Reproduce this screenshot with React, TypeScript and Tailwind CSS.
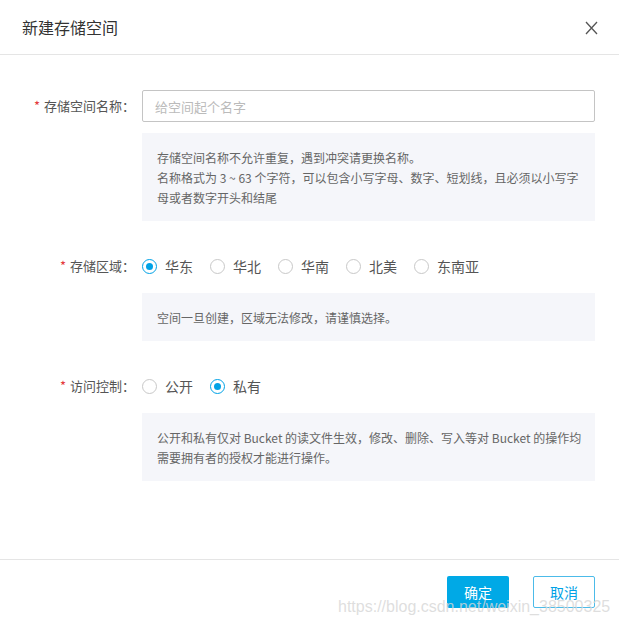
import React, { useState } from 'react';

const FONT = { fontFamily: '"Noto Sans CJK SC", "Microsoft YaHei", sans-serif' };

const regions = ['华东', '华北', '华南', '北美', '东南亚'];
const access = ['公开', '私有'];

function Radio({ checked, label, onClick }: { checked: boolean; label: string; onClick: () => void }) {
  return (
    <button type="button" onClick={onClick} className="flex items-center gap-[8px] mr-[17px]">
      <span
        className={`w-[15px] h-[15px] rounded-full border flex items-center justify-center bg-white ${
          checked ? 'border-[#00a2e6]' : 'border-[#c8c8c8]'
        }`}
      >
        {checked && <span className="w-[7px] h-[7px] rounded-full bg-[#00a2e6]" />}
      </span>
      <span className="text-[14px] text-[#555]">{label}</span>
    </button>
  );
}

function Label({ text }: { text: string }) {
  return (
    <div className="w-[137px] h-[32px] flex items-center justify-end pr-[2px] text-[13px] text-[#555] shrink-0">
      <span className="text-[#e4393c] mr-[4px]">*</span>
      {text}
    </div>
  );
}

function Hint({ children }: { children: React.ReactNode }) {
  return (
    <div className="ml-[142px] mr-[24px] mt-[11px] bg-[#f5f6fa] pl-[15px] pr-[12px] pt-[15px] pb-[13px] text-[12px] leading-[20px] text-[#666]">
      {children}
    </div>
  );
}

export default function App() {
  const [region, setRegion] = useState('华东');
  const [acl, setAcl] = useState('私有');
  const [name, setName] = useState('');

  return (
    <div className="relative w-[619px] h-[625px] bg-white flex flex-col" style={FONT}>
      {/* Header */}
      <div className="h-[55px] flex items-center justify-between pl-[22px] pr-[21px] border-b border-[#e5e5e5]">
        <span className="text-[16px] text-[#333]">新建存储空间</span>
        <svg width="13" height="14" viewBox="0 0 13 14" className="mt-[2px]">
          <path d="M1 1 L12 13 M12 1 L1 13" stroke="#555" strokeWidth="1.3" fill="none" />
        </svg>
      </div>

      {/* Body */}
      <div className="flex-1 pt-[35px]">
        <div className="flex items-center gap-[5px] pr-[24px]">
          <Label text="存储空间名称：" />
          <input
            value={name}
            onChange={(e) => setName(e.target.value)}
            placeholder="给空间起个名字"
            className="flex-1 h-[32px] border border-[#c4c4c4] rounded-[2px] px-[12px] text-[13px] text-[#333] placeholder:text-[#bbb] outline-none"
          />
        </div>
        <Hint>
          <p>存储空间名称不允许重复，遇到冲突请更换名称。</p>
          <p>名称格式为 3 ~ 63 个字符，可以包含小写字母、数字、短划线，且必须以小写字母或者数字开头和结尾</p>
        </Hint>

        <div className="flex items-center gap-[5px] mt-[29px]">
          <Label text="存储区域：" />
          <div className="flex items-center">
            {regions.map((r) => (
              <Radio key={r} label={r} checked={region === r} onClick={() => setRegion(r)} />
            ))}
          </div>
        </div>
        <Hint>
          <p>空间一旦创建，区域无法修改，请谨慎选择。</p>
        </Hint>

        <div className="flex items-center gap-[5px] mt-[29px]">
          <Label text="访问控制：" />
          <div className="flex items-center">
            {access.map((a) => (
              <Radio key={a} label={a} checked={acl === a} onClick={() => setAcl(a)} />
            ))}
          </div>
        </div>
        <Hint>
          <p>公开和私有仅对 Bucket 的读文件生效，修改、删除、写入等对 Bucket 的操作均需要拥有者的授权才能进行操作。</p>
        </Hint>
      </div>

      {/* Footer */}
      <div className="h-[66px] border-t border-[#e5e5e5] flex items-start justify-end gap-[24px] pt-[16px] pr-[24px]">
        <button className="w-[62px] h-[32px] bg-[#00a9e6] text-white text-[14px] rounded-[2px]">确定</button>
        <button className="w-[62px] h-[32px] border border-[#4cbbe9] text-[#00a2e6] text-[14px] rounded-[2px] bg-white">
          取消
        </button>
      </div>

      {/* Watermark */}
      <div
        className="absolute left-[338px] top-[595px] text-[16px] text-[#d6d6d6]/80 pointer-events-none whitespace-nowrap"
        style={{ fontFamily: '"Liberation Sans", Arial, sans-serif' }}
      >
        https://blog.csdn.net/weixin_38500325
      </div>
    </div>
  );
}
